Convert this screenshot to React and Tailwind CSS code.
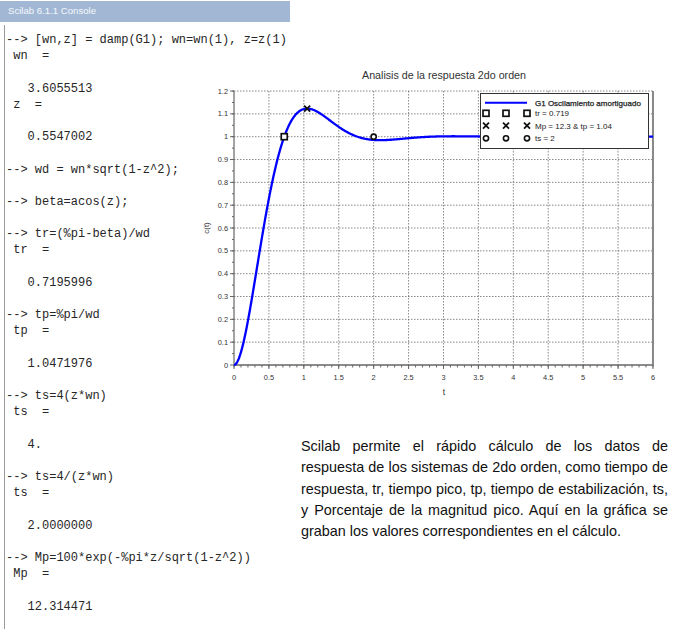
import React from 'react'

const LINES = [
  '--> [wn,z] = damp(G1); wn=wn(1), z=z(1)',
  ' wn  =',
  '',
  '   3.6055513',
  ' z  =',
  '',
  '   0.5547002',
  '',
  '--> wd = wn*sqrt(1-z^2);',
  '',
  '--> beta=acos(z);',
  '',
  '--> tr=(%pi-beta)/wd',
  ' tr  =',
  '',
  '   0.7195996',
  '',
  '--> tp=%pi/wd',
  ' tp  =',
  '',
  '   1.0471976',
  '',
  '--> ts=4(z*wn)',
  ' ts  =',
  '',
  '   4.',
  '',
  '--> ts=4/(z*wn)',
  ' ts  =',
  '',
  '   2.0000000',
  '',
  '--> Mp=100*exp(-%pi*z/sqrt(1-z^2))',
  ' Mp  =',
  '',
  '   12.314471',
]

// plot frame in page coordinates
const X0 = 234
const Y0 = 365
const SX = 69.83
const SY = 228.3
const px = t => X0 + t * SX
const py = c => Y0 - c * SY

// zeta*wn = 2, wd = 3
const step = t => 1 - Math.exp(-2 * t) * (Math.cos(3 * t) + (2 / 3) * Math.sin(3 * t))

const SANS = "'Liberation Sans', Arial, sans-serif"

function Square({ x, y }) {
  return <rect x={x - 3} y={y - 3} width={6} height={6} fill="white" stroke="#111" strokeWidth={1.7} />
}
function Cross({ x, y }) {
  return (
    <g stroke="#111" strokeWidth={1.8}>
      <line x1={x - 3} y1={y - 3} x2={x + 3} y2={y + 3} />
      <line x1={x - 3} y1={y + 3} x2={x + 3} y2={y - 3} />
    </g>
  )
}
function Circle({ x, y }) {
  return <circle cx={x} cy={y} r={2.6} fill="white" stroke="#111" strokeWidth={1.6} />
}

function Chart() {
  const pts = []
  for (let i = 0; i <= 600; i++) {
    const t = i * 0.01
    pts.push(`${px(t).toFixed(2)},${py(step(t)).toFixed(2)}`)
  }
  const xMajor = Array.from({ length: 13 }, (_, i) => i * 0.5)
  const xMinor = Array.from({ length: 61 }, (_, i) => i * 0.1)
  const yMajor = Array.from({ length: 13 }, (_, i) => i / 10)
  const yMinor = Array.from({ length: 24 }, (_, i) => i * 0.05 + 0.05)
  const label = v => (Number.isInteger(v) ? String(v) : String(Math.round(v * 10) / 10))

  return (
    <svg
      className="absolute left-[190px] top-[62px]"
      width={482}
      height={340}
      viewBox="190 62 482 340"
      style={{ fontFamily: SANS }}
    >
      <text x={444} y={79} textAnchor="middle" fontSize={10.7} fill="#333">
        Analisis de la respuesta 2do orden
      </text>

      {/* grid */}
      <g stroke="#555" strokeWidth={0.7} strokeDasharray="1.5 1.5">
        {xMajor.slice(1, 12).map(t => (
          <line key={'vx' + t} x1={px(t)} y1={py(1.2)} x2={px(t)} y2={Y0} />
        ))}
        {yMajor.slice(1).map(c => (
          <line key={'hy' + c} x1={X0} y1={py(c)} x2={px(6)} y2={py(c)} />
        ))}
      </g>

      {/* axes */}
      <line x1={X0} y1={py(1.2)} x2={X0} y2={Y0} stroke="#666" strokeWidth={1.2} />
      <line x1={X0} y1={Y0} x2={px(6)} y2={Y0} stroke="#666" strokeWidth={1.6} />
      <line x1={px(6)} y1={py(1.2)} x2={px(6)} y2={Y0 + 0.8} stroke="#888" strokeWidth={2} />

      <g stroke="#666" strokeWidth={1}>
        {yMajor.map(c => (
          <line key={'ty' + c} x1={X0 - 4} y1={py(c)} x2={X0} y2={py(c)} />
        ))}
        {yMinor.map(c => (
          <line key={'tm' + c} x1={X0 - 2} y1={py(c)} x2={X0} y2={py(c)} />
        ))}
        {xMajor.map(t => (
          <line key={'tx' + t} x1={px(t)} y1={Y0} x2={px(t)} y2={Y0 + 4} />
        ))}
        {xMinor.map(t => (
          <line key={'tn' + t} x1={px(t)} y1={Y0} x2={px(t)} y2={Y0 + 2.5} />
        ))}
      </g>

      <g fontSize={7.4} fill="#333">
        {yMajor.map(c => (
          <text key={'ly' + c} x={228} y={py(c) + 2.6} textAnchor="end">
            {label(c)}
          </text>
        ))}
        {xMajor.map(t => (
          <text key={'lx' + t} x={px(t)} y={380} textAnchor="middle">
            {label(t)}
          </text>
        ))}
      </g>

      <text x={444} y={395} textAnchor="middle" fontSize={8.5} fill="#333">t</text>
      <text x={209} y={228} textAnchor="middle" fontSize={8} fill="#333" transform="rotate(-90 209 228)">
        c(t)
      </text>

      {/* response */}
      <polyline points={pts.join(' ')} fill="none" stroke="#0000ff" strokeWidth={2.3} strokeLinejoin="round" />

      <Square x={px(0.7196)} y={py(1)} />
      <Cross x={px(1.0472)} y={py(step(1.0472))} />
      <Circle x={px(2)} y={py(1)} />

      {/* legend */}
      <rect x={480.5} y={93.5} width={168} height={55} fill="white" stroke="#333" strokeWidth={1} />
      <line x1={485} y1={102.7} x2={527} y2={102.7} stroke="#0000ff" strokeWidth={2} />
      <g fontSize={8} fill="#222">
        <text x={535} y={105.5} stroke="#222" strokeWidth={0.25}>G1 Oscilamiento amortiguado</text>
        <text x={535} y={116}>tr = 0.719</text>
        <text x={535} y={128.5}>Mp = 12.3 &amp; tp = 1.04</text>
        <text x={535} y={141}>ts = 2</text>
      </g>
      {[486, 506, 527].map(x => (
        <g key={x}>
          <Square x={x} y={113.3} />
          <Cross x={x} y={125.7} />
          <Circle x={x} y={138.3} />
        </g>
      ))}
    </svg>
  )
}

export default function App() {
  return (
    <div className="relative w-[680px] h-[632px] bg-white overflow-hidden flex">
      {/* Console */}
      <div className="w-[290px] shrink-0 flex flex-col pt-px">
        <div className="h-[21px] bg-[#a2b7d4] flex items-center px-2 text-[9.6px] text-[#f4f7fb] font-['Liberation_Sans',Arial,sans-serif]">
          Scilab 6.1.1 Console
        </div>
        <div className="ml-[4px] mt-[3px] h-[604px] border-l border-[#9a9a9a] pt-[7px] pl-[1px]">
          {LINES.map((l, i) => (
            <div
              key={i}
              className="h-[16.2px] leading-[16.2px] whitespace-pre text-[12px] text-[#262626] font-['Liberation_Mono','Courier_New',monospace]"
            >
              {l}
            </div>
          ))}
        </div>
      </div>

      {/* Description */}
      <div className="flex-1 pt-[436px] pl-[11px]">
        <p className="w-[367px] text-[14.4px] leading-[21.3px] text-[#111] text-justify font-['Liberation_Sans',Arial,sans-serif]">
          Scilab permite el rápido cálculo de los datos de respuesta de los sistemas de 2do orden, como tiempo de
          respuesta, tr, tiempo pico, tp, tiempo de estabilización, ts, y Porcentaje de la magnitud pico. Aquí en la
          gráfica se graban los valores correspondientes en el cálculo.
        </p>
      </div>

      <Chart />
    </div>
  )
}
